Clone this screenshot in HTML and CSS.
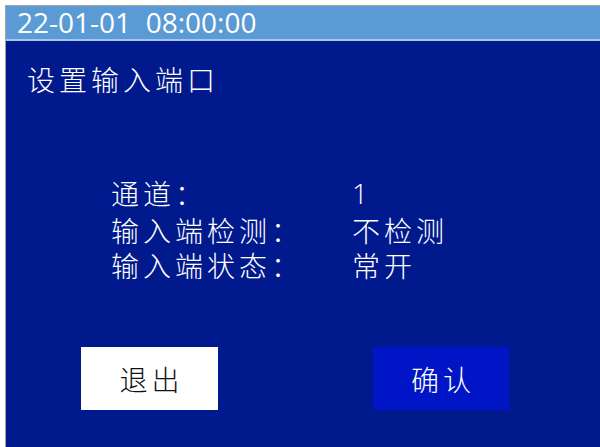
FILE: index.html
```html
<!DOCTYPE html>
<html lang="zh-CN">
<head>
<meta charset="utf-8">
<link rel="stylesheet" href="styles.css">
</head>
<body>
<div class="screen">
  <div class="header">22-01-01&nbsp;&nbsp;08:00:00</div>
  <div class="main">
    <div class="title">设置输入端口</div>
    <div class="fields">
      <div class="row first"><span class="label">通道：</span><span class="value num">1</span></div>
      <div class="row"><span class="label">输入端检测：</span><span class="value">不检测</span></div>
      <div class="row"><span class="label">输入端状态：</span><span class="value">常开</span></div>
    </div>
    <div class="buttons">
      <div class="btn btn-exit">退出</div>
      <div class="btn btn-ok">确认</div>
    </div>
  </div>
</div>
</body>
</html>
```

FILE: styles.css
```css
html, body {
  margin: 0;
  padding: 0;
  background: #ffffff;
  width: 600px;
  height: 447px;
  overflow: hidden;
}
.screen {
  margin: 5px 0 0 5px;
  border-top: 1px solid #a3a3a3;
  border-left: 1px solid #a3a3a3;
  height: 441px;
  display: flex;
  flex-direction: column;
  font-family: "Noto Sans CJK SC", sans-serif;
  font-weight: 300;
  color: #ffffff;
}
.header {
  height: 35px;
  box-sizing: border-box;
  background: #5b9bd5;
  border-bottom: 2px solid #a9c7ea;
  padding-left: 11px;
  font-family: "Open Sans", "Noto Sans CJK SC", sans-serif;
  font-weight: 400;
  font-size: 28px;
  line-height: 32px;
  white-space: nowrap;
}
.main {
  flex: 1;
  background: #00198c;
  padding: 24px 0 0 21px;
}
.title {
  font-size: 28px;
  line-height: 28px;
  letter-spacing: 4px;
}
.fields {
  margin-top: 83px;
  padding-left: 84px;
}
.row {
  display: flex;
  font-size: 28px;
  line-height: 35px;
  letter-spacing: 4px;
}
.row.first {
  margin-bottom: 2px;
}
.label {
  width: 241px;
}
.num {
  font-family: "Open Sans", sans-serif;
}
.buttons {
  display: flex;
  margin-top: 64px;
  padding-left: 54px;
  gap: 155px;
}
.btn {
  width: 137px;
  height: 63px;
  display: flex;
  align-items: center;
  justify-content: center;
  font-size: 28px;
  letter-spacing: 4px;
  text-indent: 4px;
}
.btn-exit {
  background: #ffffff;
  color: #111111;
}
.btn-ok {
  background: #0016c6;
  color: #ffffff;
  width: 136px;
}
```
